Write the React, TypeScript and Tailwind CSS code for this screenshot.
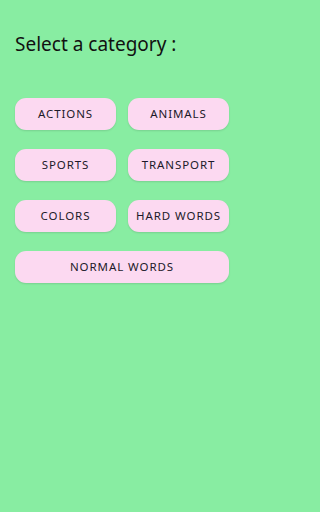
const categories = [
  ['ACTIONS', 'ANIMALS'],
  ['SPORTS', 'TRANSPORT'],
  ['COLORS', 'HARD WORDS'],
];

function CategoryButton({ label }: { label: string }) {
  return (
    <button className="h-[32px] w-full rounded-[11px] bg-[#fcd9f1] text-[11.5px] tracking-[0.08em] text-[#1d1a2a] shadow-[0_1px_2px_rgba(0,0,0,0.12)]">
      {label}
    </button>
  );
}

export default function App() {
  return (
    <div className="min-h-[512px] w-full bg-[#88eda2]" style={{ fontFamily: '"Noto Sans", sans-serif' }}>
      <div className="w-[244px] px-[15px] pt-[31px]">
        <h1 className="text-[19px] leading-[26px] text-[#111]">Select a category :</h1>

        <div className="mt-[41px] flex flex-col gap-[19px]">
          {categories.map((row, i) => (
            <div key={i} className="grid grid-cols-2 gap-[12px]">
              {row.map((label) => (
                <CategoryButton key={label} label={label} />
              ))}
            </div>
          ))}
          <CategoryButton label="NORMAL WORDS" />
        </div>
      </div>
    </div>
  );
}
